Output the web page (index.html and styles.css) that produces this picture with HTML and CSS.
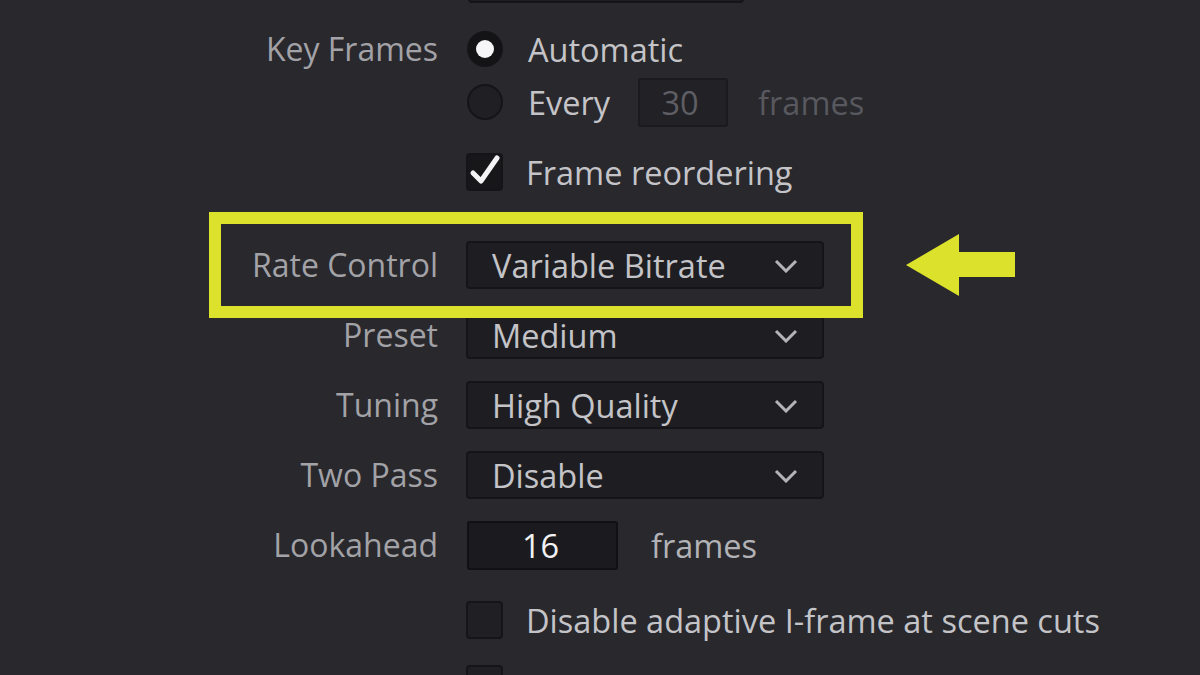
FILE: index.html
```html
<!DOCTYPE html>
<html lang="en">
<head>
    <meta charset="UTF-8">
    <meta name="viewport" content="width=device-width, initial-scale=1.0">
    <title>Encoder Settings</title>
    <link rel="stylesheet" href="styles.css">
</head>
<body>
    <div class="panel">
        <!-- field cut off by the top edge -->
        <div class="row">
            <span class="label"></span>
            <div class="select select-cut"></div>
        </div>

        <div class="row row-top">
            <span class="label">Key Frames</span>
            <div class="radio-group">
                <div class="line">
                    <span class="radio radio-on"></span>
                    <span class="value">Automatic</span>
                </div>
                <div class="line">
                    <span class="radio"></span>
                    <span class="value">Every</span>
                    <span class="num num-dim">30</span>
                    <span class="unit unit-dim">frames</span>
                </div>
            </div>
        </div>

        <div class="row">
            <span class="label"></span>
            <div class="line">
                <span class="check check-on">
                    <svg width="36" height="36" viewBox="0 0 36 36"><path d="M7 20 L15 28 L31 5" fill="none" stroke="#f4f4f6" stroke-width="5" stroke-linecap="round" stroke-linejoin="round"/></svg>
                </span>
                <span class="value">Frame reordering</span>
            </div>
        </div>

        <div class="row row-rate">
            <span class="label">Rate Control</span>
            <div class="select">
                <span class="value">Variable Bitrate</span>
                <svg class="chevron" width="24" height="14" viewBox="0 0 24 14"><path d="M2 2 L12 12 L22 2" fill="none" stroke="#b4b4b8" stroke-width="3"/></svg>
            </div>
            <svg class="arrow" width="110" height="63" viewBox="0 0 110 63"><polygon points="0,31 53,0 53,18 109,18 109,43 53,43 53,62" fill="#dce22b"/></svg>
        </div>

        <div class="row">
            <span class="label">Preset</span>
            <div class="select">
                <span class="value">Medium</span>
                <svg class="chevron" width="24" height="14" viewBox="0 0 24 14"><path d="M2 2 L12 12 L22 2" fill="none" stroke="#b4b4b8" stroke-width="3"/></svg>
            </div>
        </div>

        <div class="row">
            <span class="label">Tuning</span>
            <div class="select">
                <span class="value">High Quality</span>
                <svg class="chevron" width="24" height="14" viewBox="0 0 24 14"><path d="M2 2 L12 12 L22 2" fill="none" stroke="#b4b4b8" stroke-width="3"/></svg>
            </div>
        </div>

        <div class="row">
            <span class="label">Two Pass</span>
            <div class="select">
                <span class="value">Disable</span>
                <svg class="chevron" width="24" height="14" viewBox="0 0 24 14"><path d="M2 2 L12 12 L22 2" fill="none" stroke="#b4b4b8" stroke-width="3"/></svg>
            </div>
        </div>

        <div class="row">
            <span class="label">Lookahead</span>
            <div class="line">
                <span class="num num-wide">16</span>
                <span class="unit">frames</span>
            </div>
        </div>

        <div class="row row-check">
            <span class="label"></span>
            <div class="line">
                <span class="check"></span>
                <span class="value">Disable adaptive I-frame at scene cuts</span>
            </div>
        </div>

        <div class="row row-last">
            <span class="label"></span>
            <div class="line">
                <span class="check"></span>
            </div>
        </div>
    </div>
</body>
</html>
```

FILE: styles.css
```css
body {
    margin: 0;
    height: 675px;
    overflow: hidden;
    background-color: #28282d;
    font-family: "Open Sans", "DejaVu Sans", sans-serif;
    font-size: 32.5px;
}

.panel {
    display: flex;
    flex-direction: column;
    gap: 22px;
    margin-top: -45px;
}

.row {
    display: grid;
    grid-template-columns: 438px 1fr;
    column-gap: 28px;
    align-items: center;
    min-height: 48px;
}

.row-top {
    align-items: start;
}

.row-rate {
    position: relative;
    margin-top: 23px;
}

/* yellow highlight round the rate control row */
.row-rate::after {
    content: "";
    position: absolute;
    left: 209px;
    top: -29px;
    width: 654px;
    height: 106px;
    box-sizing: border-box;
    border: 12px solid #dce22b;
}

.arrow {
    position: absolute;
    left: 906px;
    top: -7px;
}

.row-check {
    margin-top: 5px;
}

.row-last {
    margin-top: -6px;
}

.label {
    text-align: right;
    color: #a2a2a7;
    font-size: 32px;
    line-height: 48px;
    white-space: nowrap;
}

.value {
    color: #c4c4c8;
    white-space: nowrap;
}

.select {
    width: 358px;
    height: 48px;
    box-sizing: border-box;
    display: flex;
    align-items: center;
    justify-content: space-between;
    padding: 0 24px;
    background: #1e1e22;
    border: 2px solid #151518;
    border-radius: 4px;
}

.select-cut {
    width: 276px;
    margin-left: 2px;
}

.chevron {
    margin-top: 2px;
}

.radio-group {
    display: flex;
    flex-direction: column;
    gap: 5px;
}

.line {
    display: flex;
    align-items: center;
    height: 48px;
}

.radio {
    width: 36px;
    height: 36px;
    box-sizing: border-box;
    margin-left: 1px;
    margin-right: 25px;
    border-radius: 50%;
    background: #202024;
    border: 2px solid #151518;
    display: flex;
    align-items: center;
    justify-content: center;
}

.radio-on {
    background: #141417;
}

.radio-on::after {
    content: "";
    width: 18px;
    height: 18px;
    border-radius: 50%;
    background: #f6f6f8;
}

.check {
    width: 37px;
    height: 38px;
    box-sizing: border-box;
    margin-right: 23px;
    background: #202024;
    border: 2px solid #151518;
    border-radius: 4px;
}

.check-on {
    background: #17171a;
}

.check-on svg {
    display: block;
    margin: -2px 0 0 -2px;
}

.num {
    width: 90px;
    height: 49px;
    box-sizing: border-box;
    margin-left: 28px;
    display: flex;
    align-items: center;
    justify-content: center;
    background: #222226;
    border: 2px solid #1b1b1e;
    border-radius: 3px;
    color: #5e5e64;
}

.num-dim {
    padding-right: 6px;
}

.num-wide {
    width: 151px;
    margin-left: 1px;
    background: #1b1b1f;
    border-color: #111114;
    color: #f2f2f4;
    padding-right: 4px;
}

.unit {
    margin-left: 33px;
    color: #b2b2b6;
}

.unit-dim {
    margin-left: 30px;
    color: #58585e;
}
```
